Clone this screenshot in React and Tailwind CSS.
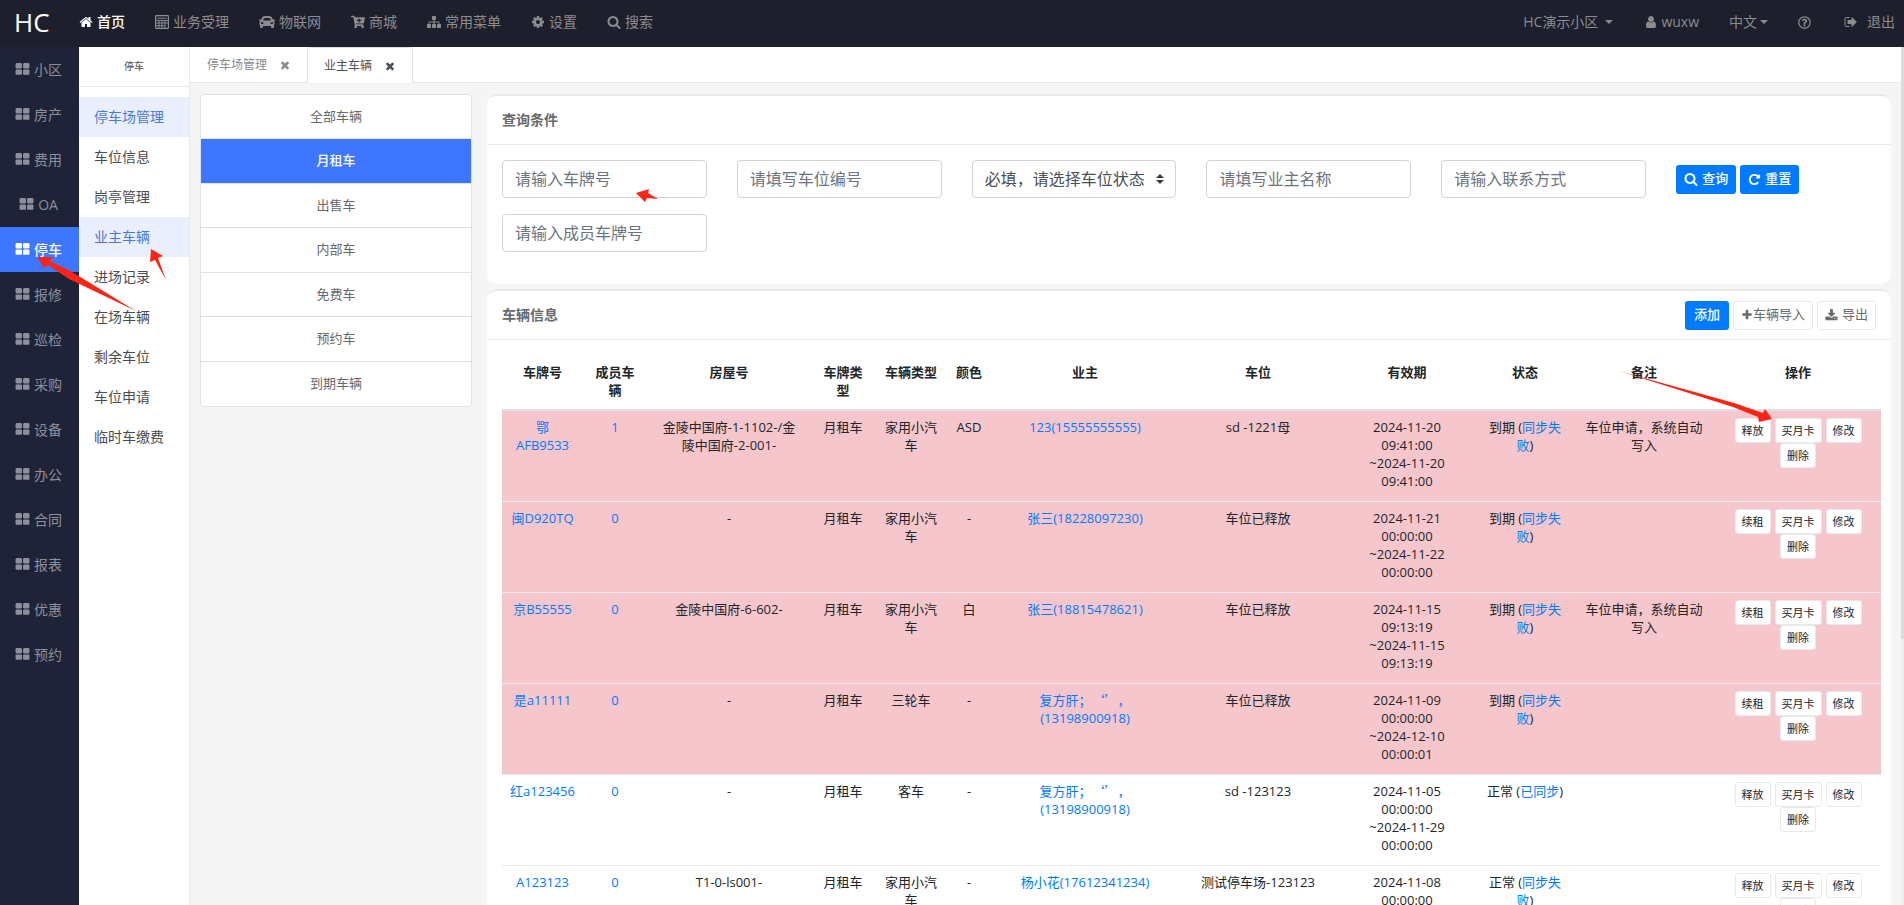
import React, { useState } from 'react';
import { FaCar, FaCartPlus, FaRegQuestionCircle } from 'react-icons/fa';

const paths = {
  home: 'M1472 992v480q0 26-19 45t-45 19h-384v-384h-256v384h-384q-26 0-45-19t-19-45v-480q0-1 .5-3t.5-3l575-474 575 474q1 2 1 6zm223-69l-62 74q-8 9-21 11h-3q-13 0-21-7l-692-577-692 577q-12 8-24 7-13-2-21-11l-62-74q-8-10-7-23.5t11-21.5l719-599q32-26 76-26t76 26l244 204v-195q0-14 9-23t23-9h192q14 0 23 9t9 23v408l219 182q10 8 11 21.5t-7 23.5z',
  search: 'M1216 832q0-185-131.5-316.5t-316.5-131.5-316.5 131.5-131.5 316.5 131.5 316.5 316.5 131.5 316.5-131.5 131.5-316.5zm512 832q0 52-38 90t-90 38q-54 0-90-38l-343-342q-179 124-399 124-143 0-273.5-55.5t-225-150-150-225-55.5-273.5 55.5-273.5 150-225 225-150 273.5-55.5 273.5 55.5 225 150 150 225 55.5 273.5q0 220-124 399l343 343q37 37 37 90z',
  cog: 'M1152 896q0-106-75-181t-181-75-181 75-75 181 75 181 181 75 181-75 75-181zm512-109v222q0 12-8 23t-20 13l-185 28q-19 54-39 91 35 50 107 138 10 12 10 25t-9 23q-27 37-99 108t-94 71q-12 0-26-9l-138-108q-44 23-91 38-16 136-29 186-7 28-36 28h-222q-14 0-24.5-8.5t-11.5-21.5l-28-184q-49-16-90-37l-141 107q-10 9-25 9-14 0-25-11-126-114-165-168-7-10-7-23 0-12 8-23 15-21 51-66.5t54-70.5q-27-50-41-99l-183-27q-13-2-21-12.5t-8-23.5v-222q0-12 8-23t19-13l186-28q14-46 39-92-40-57-107-138-10-12-10-24 0-10 9-23 26-36 98.5-107.5t94.5-71.5q13 0 26 10l138 107q44-23 91-38 16-136 29-186 7-28 36-28h222q14 0 24.5 8.5t11.5 21.5l28 184q49 16 90 37l142-107q9-9 24-9 13 0 25 10 129 119 165 170 7 8 7 22 0 12-8 23-15 21-51 66.5t-54 70.5q26 50 41 98l183 28q13 2 21 12.5t8 23.5z',
  grid: 'M832 1024v384q0 52-38 90t-90 38h-512q-52 0-90-38t-38-90v-384q0-52 38-90t90-38h512q52 0 90 38t38 90zm0-768v384q0 52-38 90t-90 38h-512q-52 0-90-38t-38-90v-384q0-52 38-90t90-38h512q52 0 90 38t38 90zm896 768v384q0 52-38 90t-90 38h-512q-52 0-90-38t-38-90v-384q0-52 38-90t90-38h512q52 0 90 38t38 90zm0-768v384q0 52-38 90t-90 38h-512q-52 0-90-38t-38-90v-384q0-52 38-90t90-38h512q52 0 90 38t38 90z',
  times: 'M1490 1322q0 40-28 68l-136 136q-28 28-68 28t-68-28l-294-294-294 294q-28 28-68 28t-68-28l-136-136q-28-28-28-68t28-68l294-294-294-294q-28-28-28-68t28-68l136-136q28-28 68-28t68 28l294 294 294-294q28-28 68-28t68 28l136 136q28 28 28 68t-28 68l-294 294 294 294q28 28 28 68z',
  plus: 'M1600 736v192q0 40-28 68t-68 28h-416v416q0 40-28 68t-68 28h-192q-40 0-68-28t-28-68v-416h-416q-40 0-68-28t-28-68v-192q0-40 28-68t68-28h416v-416q0-40 28-68t68-28h192q40 0 68 28t28 68v416h416q40 0 68 28t28 68z',
  repeat: 'M1664 256v448q0 26-19 45t-45 19h-448q-42 0-59-40-17-39 14-69l138-138q-148-137-349-137-104 0-198.5 40.5t-163.5 109.5-109.5 163.5-40.5 198.5 40.5 198.5 109.5 163.5 163.5 109.5 198.5 40.5q119 0 225-52t179-147q7-10 23-12 15 0 25 9l137 138q9 8 9.5 20.5t-7.5 22.5q-109 132-264 204.5t-327 72.5q-156 0-298-61t-245-164-164-245-61-298 61-298 164-245 245-164 298-61q147 0 284.5 55.5t244.5 156.5l130-129q29-31 70-14 39 17 39 59z',
  sitemap: 'M1792 1248v320q0 40-28 68t-68 28h-320q-40 0-68-28t-28-68v-320q0-40 28-68t68-28h96v-192h-512v192h96q40 0 68 28t28 68v320q0 40-28 68t-68 28h-320q-40 0-68-28t-28-68v-320q0-40 28-68t68-28h96v-192h-512v192h96q40 0 68 28t28 68v320q0 40-28 68t-68 28h-320q-40 0-68-28t-28-68v-320q0-40 28-68t68-28h96v-192q0-52 38-90t90-38h512v-192h-96q-40 0-68-28t-28-68v-320q0-40 28-68t68-28h320q40 0 68 28t28 68v320q0 40-28 68t-68 28h-96v192h512q52 0 90 38t38 90v192h96q40 0 68 28t28 68z',
  user: 'M1536 1399q0 109-62.5 187t-150.5 78h-854q-88 0-150.5-78t-62.5-187q0-85 8.5-160.5t31.5-152 58.5-131 94-89 134.5-34.5q131 128 313 128t313-128q76 0 134.5 34.5t94 89 58.5 131 31.5 152 8.5 160.5zm-256-887q0 159-112.5 271.5t-271.5 112.5-271.5-112.5-112.5-271.5 112.5-271.5 271.5-112.5 271.5 112.5 112.5 271.5z',
  download: 'M1344 1344q0-26-19-45t-45-19-45 19-19 45 19 45 45 19 45-19 19-45zm256 0q0-26-19-45t-45-19-45 19-19 45 19 45 45 19 45-19 19-45zm128-224v320q0 40-28 68t-68 28h-1472q-40 0-68-28t-28-68v-320q0-40 28-68t68-28h465l135 136q58 56 136 56t136-56l136-136h464q40 0 68 28t28 68zm-325-569q17 41-14 70l-448 448q-18 19-45 19t-45-19l-448-448q-31-29-14-70 17-39 59-39h256v-448q0-26 19-45t45-19h256q26 0 45 19t19 45v448h256q42 0 59 39z',
  signOut: 'M704 1440q0 4 1 20t.5 26.5-3 23.5-10 19.5-20.5 6.5h-320q-119 0-203.5-84.5t-84.5-203.5v-704q0-119 84.5-203.5t203.5-84.5h320q13 0 22.5 9.5t9.5 22.5q0 4 1 20t.5 26.5-3 23.5-10 19.5-20.5 6.5h-320q-66 0-113 47t-47 113v704q0 66 47 113t113 47h312l11.5 1 11.5 3 8 5.5 7 9 2 13.5zm928-544q0 26-19 45l-544 544q-19 19-45 19t-45-19-19-45v-288h-448q-26 0-45-19t-19-45v-384q0-26 19-45t45-19h448v-288q0-26 19-45t45-19 45 19l544 544q19 19 19 45z',
};

const Icon = ({ name, className = 'size-[14px]' }) => (
  <svg viewBox="0 0 1792 1792" fill="currentColor" className={`shrink-0 ${className}`} aria-hidden="true">
    <path d={paths[name]} />
  </svg>
);

const CalculatorIcon = () => (
  <svg viewBox="0 0 14 14" fill="none" stroke="currentColor" className="size-[14px] shrink-0" aria-hidden="true">
    <rect x="0.6" y="0.6" width="12.8" height="12.8" rx="0.6" strokeWidth="1.2" />
    <path d="M2.5 3.2h9M.6 5.4h12.8M.6 8h12.8M.6 10.7h9M4 5.4v8M7 5.4v8M10 5.4v8" />
  </svg>
);

const Caret = () => (
  <span className="inline-block border-x-4 border-t-4 border-x-transparent border-t-current" />
);

const topMenus = [
  { label: '首页', icon: <Icon name="home" />, active: true },
  { label: '业务受理', icon: <CalculatorIcon /> },
  { label: '物联网', icon: <FaCar className="size-4" /> },
  { label: '商城', icon: <FaCartPlus className="size-[14px]" /> },
  { label: '常用菜单', icon: <Icon name="sitemap" /> },
  { label: '设置', icon: <Icon name="cog" /> },
  { label: '搜索', icon: <Icon name="search" /> },
];

const catalogs = ['小区', '房产', '费用', 'OA', '停车', '报修', '巡检', '采购', '设备', '办公', '合同', '报表', '优惠', '预约'];

const subMenus = ['停车场管理', '车位信息', '岗亭管理', '业主车辆', '进场记录', '在场车辆', '剩余车位', '车位申请', '临时车缴费'];

const carGroups = ['全部车辆', '月租车', '出售车', '内部车', '免费车', '预约车', '到期车辆'];

const columns = [
  { title: '车牌号', width: 'w-[81px]' },
  { title: '成员车辆', width: 'w-[64px]' },
  { title: '房屋号', width: 'w-[164px]' },
  { title: '车牌类型', width: 'w-[64px]' },
  { title: '车辆类型', width: 'w-[72px]' },
  { title: '颜色', width: 'w-[44px]' },
  { title: '业主', width: 'w-[188px]' },
  { title: '车位', width: 'w-[158px]' },
  { title: '有效期', width: 'w-[140px]' },
  { title: '状态', width: 'w-[96px]' },
  { title: '备注', width: 'w-[142px]' },
  { title: '操作', width: 'w-[166px]' },
];

const cars = [
  {
    carNum: '鄂\nAFB9533', members: 1, room: '金陵中国府-1-1102-/金\n陵中国府-2-001-', carType: '家用小汽车', color: 'ASD',
    owner: '123', link: '(15555555555)', space: 'sd -1221母',
    time: '2024-11-20\n09:41:00\n~2024-11-20\n09:41:00', expired: true, state: '到期', sync: '同步失败',
    remark: '车位申请，系统自动写入', action: '释放',
  },
  {
    carNum: '闽D920TQ', members: 0, room: '-', carType: '家用小汽车', color: '-',
    owner: '张三', link: '(18228097230)', space: '车位已释放',
    time: '2024-11-21\n00:00:00\n~2024-11-22\n00:00:00', expired: true, state: '到期', sync: '同步失败',
    remark: '', action: '续租',
  },
  {
    carNum: '京B55555', members: 0, room: '金陵中国府-6-602-', carType: '家用小汽车', color: '白',
    owner: '张三', link: '(18815478621)', space: '车位已释放',
    time: '2024-11-15\n09:13:19\n~2024-11-15\n09:13:19', expired: true, state: '到期', sync: '同步失败',
    remark: '车位申请，系统自动写入', action: '续租',
  },
  {
    carNum: '是a11111', members: 0, room: '-', carType: '三轮车', color: '-',
    owner: '复方肝；‘’，\n', link: '(13198900918)', space: '车位已释放',
    time: '2024-11-09\n00:00:00\n~2024-12-10\n00:00:01', expired: true, state: '到期', sync: '同步失败',
    remark: '', action: '续租',
  },
  {
    carNum: '红a123456', members: 0, room: '-', carType: '客车', color: '-',
    owner: '复方肝；‘’，\n', link: '(13198900918)', space: 'sd -123123',
    time: '2024-11-05\n00:00:00\n~2024-11-29\n00:00:00', expired: false, state: '正常', sync: '已同步',
    remark: '', action: '释放',
  },
  {
    carNum: 'A123123', members: 0, room: 'T1-0-ls001-', carType: '家用小汽车', color: '-',
    owner: '杨小花', link: '(17612341234)', space: '测试停车场-123123',
    time: '2024-11-08\n00:00:00\n~2024-11-30\n00:00:00', expired: false, state: '正常', sync: '同步失败',
    remark: '', action: '释放',
  },
];

const Header = () => (
  <header className="flex h-[47px] shrink-0 items-center bg-[#1e1f2c] pb-[3px] text-sm text-[#8c8c8c]">
    <a href="#" className="w-[64px] pl-[14px] text-[26px] leading-none text-white">HC</a>
    <nav className="flex flex-1 items-center">
      {topMenus.map((item) => (
        <a
          key={item.label}
          href="#"
          className={`flex items-center gap-1 px-[15px] ${item.active ? 'font-medium text-white' : ''}`}
        >
          {item.icon}
          {item.label}
        </a>
      ))}
    </nav>
    <div className="flex items-center pr-[9px]">
      <button type="button" className="flex items-center gap-[7px] px-4">
        HC演示小区 <Caret />
      </button>
      <a href="#" className="flex items-center gap-[3px] px-[15px]">
        <Icon name="user" />
        wuxw
      </a>
      <button type="button" className="flex items-center gap-[3px] px-[15px]">
        中文 <Caret />
      </button>
      <a href="#" className="px-[15px]" aria-label="帮助">
        <FaRegQuestionCircle className="size-[13px]" />
      </a>
      <a href="#" className="flex items-center gap-[9px] pl-[18px]">
        <Icon name="signOut" />
        退出
      </a>
    </div>
  </header>
);

const ActionButton = ({ children }) => (
  <button
    type="button"
    className="h-[25px] rounded-[3px] border border-[#e7eaec] bg-white px-[6px] text-[11px] text-[#212529]"
  >
    {children}
  </button>
);

const Field = ({ placeholder }) => (
  <input
    type="text"
    placeholder={placeholder}
    aria-label={placeholder}
    className="h-[38px] w-full rounded border border-[#ced4da] bg-white px-3 text-base text-[#495057] placeholder:text-[#6c757d]"
  />
);

const Card = ({ title, actions, children }) => (
  <section className="rounded-[10px] border-t-2 border-[#e7eaec] bg-white">
    <div className="flex h-[49px] items-center justify-between border-b border-[#e7eaec] px-[15px]">
      <h5 className="text-sm font-semibold text-[#676a6c]">{title}</h5>
      {actions}
    </div>
    {children}
  </section>
);

const SearchForm = () => (
  <Card title="查询条件">
    <form className="grid grid-cols-6 gap-x-[30px] gap-y-4 px-[15px] pt-[15px] pb-8 xl:mr-[-5px]">
      <Field placeholder="请输入车牌号" />
      <Field placeholder="请填写车位编号" />
      <div className="relative">
        <select
          aria-label="车位状态"
          className="h-[38px] w-full appearance-none rounded border border-[#ced4da] bg-white px-3 text-base text-[#495057]"
        >
          <option>必填，请选择车位状态</option>
        </select>
        <svg viewBox="0 0 8 10" className="pointer-events-none absolute top-[14px] right-3 h-[10px] w-2" fill="#343a40">
          <path d="M4 0l4 4H0zM4 10l4-4H0z" />
        </svg>
      </div>
      <Field placeholder="请填写业主名称" />
      <Field placeholder="请输入联系方式" />
      <div className="flex items-center gap-1">
        <button type="button" className="flex h-[29px] items-center gap-1 rounded-[3px] bg-[#007bff] px-2 text-[13px] font-medium text-white">
          <Icon name="search" />
          查询
        </button>
        <button type="button" className="flex h-[29px] items-center gap-1 rounded-[3px] bg-[#007bff] px-2 text-[13px] font-medium text-white">
          <Icon name="repeat" className="size-[13px]" />
          重置
        </button>
      </div>
      <Field placeholder="请输入成员车牌号" />
    </form>
  </Card>
);

const CarTable = () => (
  <div className="pt-[15px] pr-[10px] pb-5 pl-[15px]">
    <table className="w-full table-fixed border-collapse text-center text-[13px] leading-[18px] text-[#212529]">
      <thead>
        <tr className="border-b-2 border-[#dee2e6]">
          {columns.map((col) => (
            <th key={col.title} className={`px-2 pt-2 pb-[10px] align-top font-bold first:px-0 ${col.width}`}>
              {col.title}
            </th>
          ))}
        </tr>
      </thead>
      <tbody>
        {cars.map((car) => (
          <tr
            key={car.carNum}
            className={`border-b border-[#e7eaec] align-top whitespace-pre-line ${car.expired ? 'bg-[#f5c6cb]' : ''}`}
          >
            <td className="pt-[7px] pb-[11px]">
              <a href="#" className="text-[#007bff]">{car.carNum}</a>
            </td>
            <td className="px-2 pt-[7px] pb-[11px]">
              <a href="#" className="text-[#007bff]">{car.members}</a>
            </td>
            <td className="px-2 pt-[7px] pb-[11px]">{car.room}</td>
            <td className="px-2 pt-[7px] pb-[11px]">月租车</td>
            <td className="px-2 pt-[7px] pb-[11px]">{car.carType}</td>
            <td className="pt-[7px] pb-[11px]">{car.color}</td>
            <td className="px-2 pt-[7px] pb-[11px]">
              <a href="#" className="text-[#007bff]">
                <span
                  className={
                    car.owner.includes('；')
                      ? "font-['Noto_Sans_CJK_SC',sans-serif] [text-spacing-trim:space-all]"
                      : ''
                  }
                >
                  {car.owner}
                </span>
                {car.link}
              </a>
            </td>
            <td className="px-2 pt-[7px] pb-[11px]">{car.space}</td>
            <td className="px-2 pt-[7px] pb-[11px]">{car.time}</td>
            <td className="px-2 pt-[7px] pb-[11px]">
              {car.state} (<a href="#" className="text-[#007bff]">{car.sync}</a>)
            </td>
            <td className="px-2 pt-[7px] pb-[11px]">{car.remark}</td>
            <td className="px-2 pt-[7px] pb-[11px]">
              <div className="flex flex-wrap justify-center gap-x-1">
                <ActionButton>{car.action}</ActionButton>
                <ActionButton>买月卡</ActionButton>
                <ActionButton>修改</ActionButton>
                <ActionButton>删除</ActionButton>
              </div>
            </td>
          </tr>
        ))}
      </tbody>
    </table>
  </div>
);

// Red pointers for the walkthrough: parking menu, owner cars, plate search, buy monthly card
const GuideArrows = () => (
  <svg className="pointer-events-none absolute inset-0 size-full" fill="#fb2416" aria-hidden="true">
    <path d="M37 257L53 257L50 261L72 272L136 311L69 279L48 265L44 268Z" />
    <path d="M151 249L163 256L158 258L166 280L155 260L150 262Z" />
    <path d="M636 193L649 189L648 193L658 199L647 198L645 202Z" />
    <path d="M1772 419L1765 409L1763 413L1734 403L1619 371L1733 407L1758 417L1759 422Z" />
  </svg>
);

const App = () => {
  const [group, setGroup] = useState('月租车');

  return (
    <div className="relative flex h-screen flex-col overflow-hidden bg-[#f5f5f5] font-['Open_Sans','Noto_Sans_CJK_SC',sans-serif]">
      <Header />
      <div className="flex min-h-0 flex-1">
        {/* Catalogs */}
        <nav className="w-[79px] shrink-0 bg-[#1f2338] text-sm text-[#8d909c]">
          {catalogs.map((name) => (
            <a
              key={name}
              href="#"
              className={`flex h-[45px] items-center justify-center gap-1 pr-[2px] ${
                name === '停车' ? 'bg-[#3f76ff] font-medium text-white' : ''
              }`}
            >
              <Icon name="grid" className="size-[15px]" />
              {name}
            </a>
          ))}
        </nav>

        {/* Sub menus */}
        <nav className="w-[111px] shrink-0 border-r border-[#e7eaec] bg-white text-sm text-[#4a4c50]">
          <div className="mb-[10px] flex h-10 items-center justify-center border-b border-[#e7eaec] text-[10px]">停车</div>
          {subMenus.map((name) => (
            <a
              key={name}
              href="#"
              className={`flex h-10 items-center pl-[15px] ${
                name === '停车场管理' || name === '业主车辆' ? 'bg-[#e9effd] text-[#4a78e0]' : ''
              }`}
            >
              {name}
            </a>
          ))}
        </nav>

        <main className="min-w-0 flex-1">
          {/* Tabs */}
          <div className="flex h-9 rounded-br border-b border-[#e7eaec] bg-white text-xs">
            <div className="flex items-center gap-3 pr-4 pl-[17px] text-[#8a8a8a]">
              <a href="#">停车场管理</a>
              <button type="button" aria-label="关闭"><Icon name="times" className="size-3" /></button>
            </div>
            <div className="-mb-px flex items-center gap-3 rounded-t border border-b-0 border-[#dee2e6] bg-white pr-4 pl-4 text-[#495057]">
              <a href="#">业主车辆</a>
              <button type="button" aria-label="关闭"><Icon name="times" className="size-3" /></button>
            </div>
          </div>

          <div className="flex items-start gap-[15px] pt-[11px] pr-[10px] pl-[10px]">
            {/* Car types */}
            <ul className="grid h-[313px] w-68 shrink-0 auto-rows-fr divide-y divide-[#dee2e6] rounded border border-[#dee2e6] bg-white text-[13px] text-[#676a6c]">
              {carGroups.map((name) => (
                <li key={name}>
                  <button
                    type="button"
                    onClick={() => setGroup(name)}
                    className={`size-full ${group === name ? 'bg-[#3f76ff] font-medium text-white' : ''}`}
                  >
                    {name}
                  </button>
                </li>
              ))}
            </ul>

            <div className="flex min-w-0 flex-1 flex-col gap-[5px]">
              <SearchForm />
              <Card
                title="车辆信息"
                actions={
                  <div className="flex gap-1 text-[13px] text-[#676a6c]">
                    <button type="button" className="h-[29px] rounded-[3px] bg-[#007bff] px-[9px] font-medium text-white">
                      添加
                    </button>
                    <button type="button" className="flex h-[29px] items-center rounded-[3px] border border-[#e7eaec] bg-white px-[7px]">
                      <Icon name="plus" className="size-3" />
                      车辆导入
                    </button>
                    <button type="button" className="flex h-[29px] items-center gap-1 rounded-[3px] border border-[#e7eaec] bg-white px-[7px]">
                      <Icon name="download" className="size-[13px]" />
                      导出
                    </button>
                  </div>
                }
              >
                <CarTable />
              </Card>
            </div>
          </div>
        </main>

        {/* Scroll bar */}
        <div className="w-[3px] shrink-0 bg-[#f0f0f0]">
          <div className="h-[69%] bg-[#dcdcdc]" />
        </div>
      </div>
      <GuideArrows />
    </div>
  );
};

export default App;
